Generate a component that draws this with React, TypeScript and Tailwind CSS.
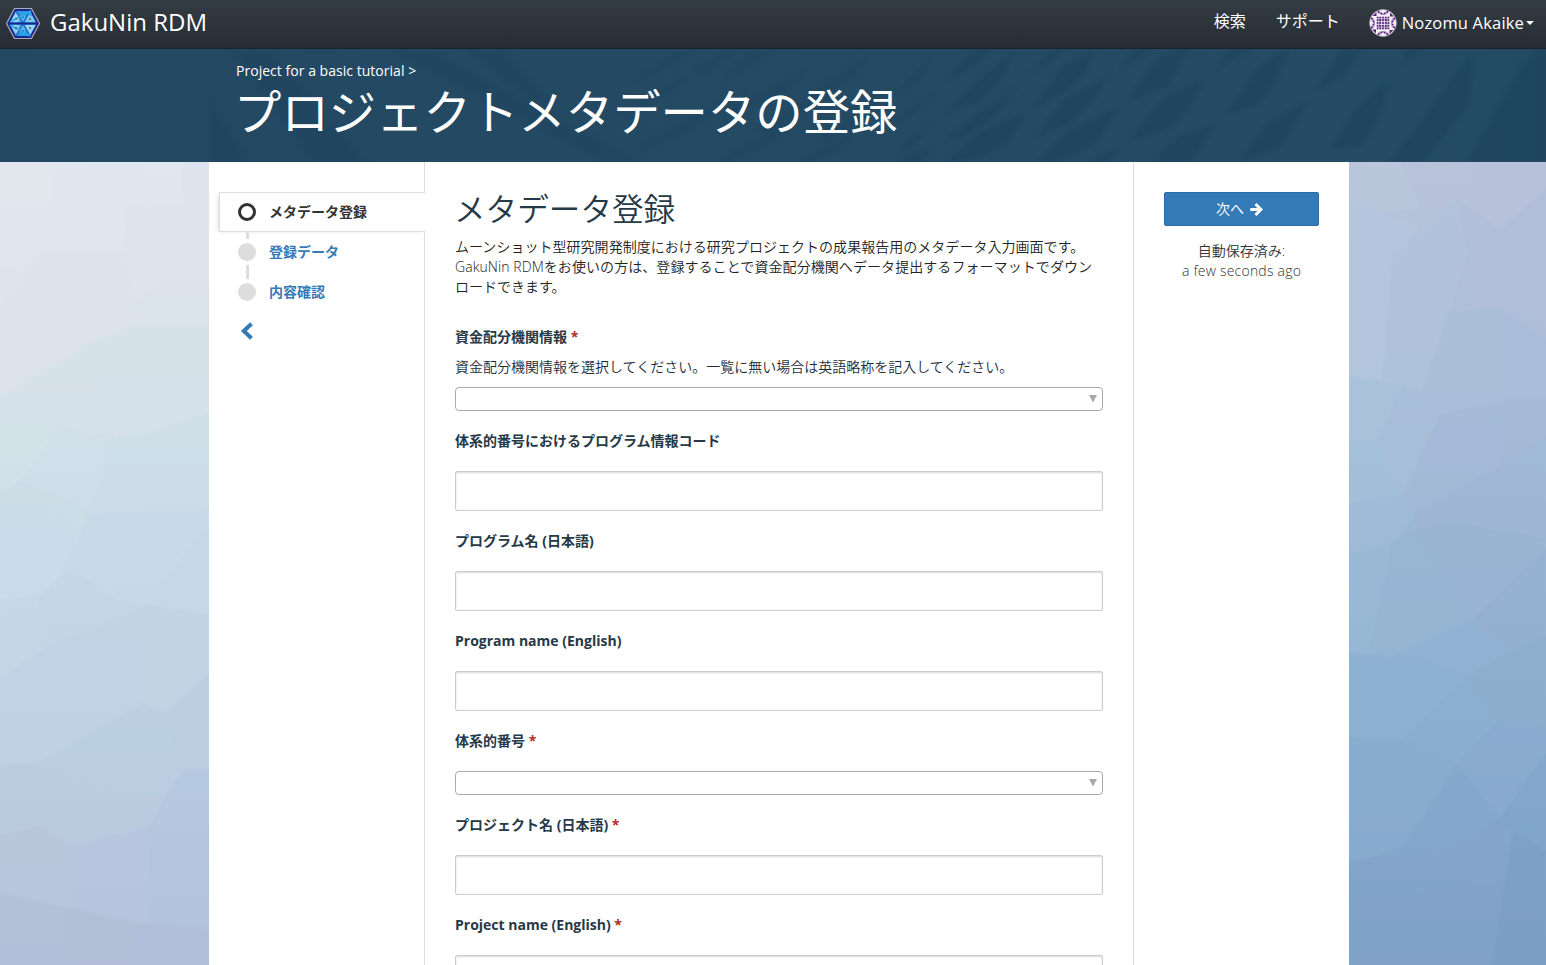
import React from "react";

const jp = "font-['Open_Sans','Noto_Sans_CJK_JP',sans-serif]";

type Facet = [string, string];

const leftFacets: Facet[] = [
  ["0,0 165,0 165,70 130,90 0,95", "#e3e8ee"],
  ["165,0 480,0 370,70 380,90 165,85", "#e0e6ed"],
  ["440,0 550,0 550,95 370,90", "#dfe7f0"],
  ["0,95 375,90 375,175 130,175 60,208 0,208", "#e1e7f0"],
  ["0,208 60,208 130,180 0,290", "#dfe5ee"],
  ["0,290 130,180 375,180 410,330 265,360 200,390 0,465", "#dde3ed"],
  ["550,0 645,0 645,95 550,95", "#dde4ed"],
  ["380,90 645,95 645,245 480,245 410,280 375,180", "#dee4ed"],
  ["410,280 480,245 645,245 645,325 410,325", "#dae2eb"],
  ["0,465 200,390 265,360 320,470 320,540 180,525 0,520", "#d6e2ea"],
  ["265,360 410,325 645,325 645,490 480,530 350,545", "#d5e2ea"],
  ["0,520 180,525 60,620 0,645", "#d3e3e9"],
  ["180,525 320,540 300,670 235,670 60,630", "#d1dfe9"],
  ["320,545 370,545 480,530 645,490 645,650 300,640", "#cddfe8"],
  ["0,650 60,630 235,670 265,720 130,720 130,680 0,680", "#ccdee6"],
  ["300,640 645,650 645,690 265,690", "#cddde7"],
  ["0,680 130,680 235,725 200,790 120,850 0,860", "#cadce9"],
  ["265,690 645,685 600,730 460,865 370,860 200,790", "#c8dae7"],
  ["600,730 645,710 645,890 450,870 490,830", "#c4d8e6"],
  ["0,860 120,850 130,960 80,1010 0,1010", "#c6d8e7"],
  ["120,850 220,800 350,860 450,870 340,900 130,950", "#c5d6e6"],
  ["130,955 340,900 450,870 430,1060 330,1095 120,1175 0,1180 0,1015", "#c0d3e4"],
  ["450,870 645,890 645,990 480,1070 430,1060", "#c1d4e3"],
  ["120,1175 330,1095 430,1060 500,1080 550,1160 500,1240 390,1245", "#bbcfe2"],
  ["500,1080 645,990 645,1190 550,1190", "#bacde1"],
  ["0,1180 120,1175 390,1245 500,1240 440,1300 220,1340 0,1320", "#bbcce0"],
  ["500,1240 550,1190 645,1190 645,1450 450,1300", "#b4c8e1"],
  ["0,1320 120,1300 210,1340 210,1460 0,1430", "#bac6dc"],
  ["210,1340 450,1300 450,1480 330,1480 210,1460", "#b8c5df"],
  ["450,1300 645,1300 645,1500 450,1480", "#b3c4de"],
  ["0,1430 210,1460 210,1568 0,1568", "#b4c0d8"],
  ["210,1460 420,1490 380,1568 210,1568", "#b3bed7"],
  ["420,1490 645,1500 645,1568 380,1568", "#b1bed9"],
];

const rightFacets: Facet[] = [
  ["27,0 180,0 250,90 60,100 27,80", "#b9c8dc"],
  ["180,0 420,0 370,70 250,100", "#b8c3db"],
  ["420,0 618,0 618,60 480,140 370,80", "#b8c1da"],
  ["27,80 230,130 160,190 130,430 27,425", "#b4c7df"],
  ["160,190 350,80 390,180 300,370 250,450 130,430", "#b1c3dc"],
  ["350,80 480,140 430,280 330,300 390,180", "#b1bfd9"],
  ["480,140 618,60 618,370 550,330 430,280", "#b0bdd9"],
  ["250,450 330,300 480,290 490,470 300,500", "#aabed8"],
  ["480,290 618,350 618,470 490,470", "#a9bcd8"],
  ["27,425 190,440 130,560 27,610", "#aac3da"],
  ["190,440 300,500 190,655 110,550", "#a8bfda"],
  ["27,550 110,550 190,655 27,670", "#a5c0da"],
  ["300,500 490,470 490,595 220,690 190,655", "#a4bad8"],
  ["490,470 618,470 618,545 490,595", "#a6b8d4"],
  ["490,595 618,545 618,610 570,620", "#9eb9d6"],
  ["220,690 490,595 618,610 618,735 350,710 220,710", "#a0b6d5"],
  ["27,670 190,655 220,690 160,745 27,770", "#a0bcd8"],
  ["27,770 160,745 90,960 27,960", "#99bad6"],
  ["160,745 220,720 380,860 390,900 160,970 90,960", "#96b6d4"],
  ["220,720 350,710 618,740 500,860 400,900", "#99b3d3"],
  ["400,900 618,760 618,930 510,960 390,1000", "#94b0d0"],
  ["27,960 160,970 390,900 510,960 380,1010 270,1080 27,1090", "#91b3d3"],
  ["27,970 240,970 380,1010 190,1130 27,1120", "#8db2d2"],
  ["380,1010 510,960 618,930 618,1110 470,1100", "#8caecc"],
  ["190,1130 380,1010 470,1100 350,1180", "#8aafd0"],
  ["27,1130 190,1130 350,1180 200,1330 27,1370", "#89adcf"],
  ["350,1180 470,1100 618,1110 618,1160 480,1285", "#88abcf"],
  ["200,1330 350,1180 480,1285 350,1340 100,1390", "#83a8cb"],
  ["480,1285 618,1160 618,1350 520,1310", "#81a6cb"],
  ["27,1370 350,1340 480,1285 500,1410 160,1440 27,1450", "#82a5c9"],
  ["27,1450 160,1440 500,1410 460,1568 27,1568", "#80a3c7"],
  ["500,1400 520,1310 618,1350 618,1568 460,1568", "#7c9fc6"],
];

const blades = [
  "0,140 80,35 45,100 0,150",
  "0,215 85,140 45,185 0,232",
  "110,110 180,15 225,12 170,65",
  "115,205 190,110 275,20 245,100 190,165",
  "110,285 210,190 285,125 215,225 165,265",
  "0,310 75,235 45,280 0,325",
  "0,345 80,310 50,350 0,350",
  "315,85 370,15 400,12 370,45",
  "325,187 395,70 470,15 450,80 400,140",
  "330,275 400,165 505,95 465,165 410,235",
  "110,350 200,260 305,205 255,300 190,335",
  "335,350 410,260 525,190 480,285 425,330 370,350",
  "535,75 565,12 610,12 570,45",
  "550,172 615,60 665,12 700,12 650,120",
  "560,285 640,160 735,105 700,185 660,245",
  "620,350 680,275 765,240 705,350",
  "455,350 535,310 510,350",
  "760,80 800,12 850,12 800,45",
  "795,208 870,70 940,15 905,120 865,180",
  "825,350 890,240 990,165 950,250 920,305",
  "1010,140 1075,12 1120,12 1080,90",
  "1045,315 1105,200 1190,100 1160,220 1120,300",
  "1190,350 1260,240 1390,20 1380,180 1270,350",
  "1215,60 1235,12 1270,12",
  "1380,350 1480,130 1540,12 1568,12 1568,350",
];

const fineBlades = [
  "1180,0 1240,0 1170,50 1120,90",
  "1060,60 1130,0 1150,0 1080,70",
  "920,90 1040,0 1060,0 950,85",
  "890,190 1040,80 1020,110 910,200",
  "1140,180 1300,60 1260,120 1150,195",
  "1010,230 1170,120 1120,170 1020,245",
  "930,290 1100,180 1060,230 940,300",
  "1190,240 1340,120 1300,180 1210,260",
  "1120,320 1270,220 1220,280 1130,336",
  "1310,130 1440,10 1410,70 1330,150",
  "1330,260 1460,150 1420,210 1350,275",
  "1280,336 1400,250 1370,300 1310,336",
  "0,150 90,336 0,336",
  "50,0 130,0 340,336 230,336",
  "390,0 480,0 940,336 860,336",
  "560,0 640,0 760,180 700,150",
];

function Backdrop() {
  return (
    <svg className="absolute inset-0 h-full w-full" viewBox="0 0 1546 965" aria-hidden="true">
      <defs>
        <linearGradient id="skyL" x1="0" y1="0" x2="0" y2="1">
          <stop offset="0" stopColor="#e2e7ee" />
          <stop offset="0.2" stopColor="#dce3ec" />
          <stop offset="0.3" stopColor="#d5e1ea" />
          <stop offset="0.45" stopColor="#cadce8" />
          <stop offset="0.6" stopColor="#c3d6e5" />
          <stop offset="0.8" stopColor="#bacbe0" />
          <stop offset="1" stopColor="#b2bed8" />
        </linearGradient>
        <linearGradient id="skyR" x1="0" y1="0" x2="0" y2="1">
          <stop offset="0" stopColor="#b9c3da" />
          <stop offset="0.3" stopColor="#a9bfd9" />
          <stop offset="0.5" stopColor="#99b6d5" />
          <stop offset="0.75" stopColor="#88acce" />
          <stop offset="1" stopColor="#7d9fc6" />
        </linearGradient>
        <filter id="soft"><feGaussianBlur stdDeviation="2.5" /></filter>
      </defs>
      <rect x="0" y="162" width="215" height="803" fill="url(#skyL)" />
      <rect x="1345" y="162" width="201" height="803" fill="url(#skyR)" />
      <g transform="translate(0 160) scale(0.33333 0.5134)" opacity="0.75" filter="url(#soft)">
        {leftFacets.map(([p, c]) => <polygon key={p} points={p} fill={c} stroke={c} strokeWidth="6" />)}
      </g>
      <g transform="translate(1340 160) scale(0.33333 0.5134)" opacity="0.75" filter="url(#soft)">
        {rightFacets.map(([p, c]) => <polygon key={p} points={p} fill={c} stroke={c} strokeWidth="6" />)}
      </g>
    </svg>
  );
}

function BannerPattern() {
  return (
    <svg className="absolute inset-0 h-full w-full" viewBox="0 49 1546 113" aria-hidden="true">
      <defs>
        <filter id="bladeBlur"><feGaussianBlur stdDeviation="5" /></filter>
        <linearGradient id="edge" x1="0" x2="1" y1="0" y2="0">
          <stop offset="0" stopColor="#224863" />
          <stop offset="0.3" stopColor="#244963" />
          <stop offset="0.9" stopColor="#254b65" />
          <stop offset="1" stopColor="#234a64" />
        </linearGradient>
      </defs>
      <rect y="49" width="1546" height="113" fill="url(#edge)" />
      <g transform="translate(900 45) scale(0.412 0.3333)" fill="#1c435d" opacity="0.6" filter="url(#bladeBlur)">
        {blades.map((p) => <polygon key={p} points={p} />)}
      </g>
      <g transform="translate(209 50) scale(0.4592 0.3333)" fill="#1c435d" opacity="0.35" filter="url(#bladeBlur)">
        {fineBlades.map((p) => <polygon key={p} points={p} />)}
      </g>
    </svg>
  );
}

function Logo() {
  return (
    <svg className="h-[34px] w-[36px]" viewBox="0 0 36 34" aria-hidden="true">
      <polygon points="9.5,1.5 26.5,1.5 34.5,16.5 26.5,31.5 9.5,31.5 1.5,16.5" fill="#1c2590" stroke="#a9adb5" strokeWidth="1.2" />
      <polygon points="11,4 25,4 31.8,16.5 25,29 11,29 4.2,16.5" fill="#2c9be2" />
      <polygon points="11,5 17,15 5.5,15" fill="#9fd8f2" />
      <polygon points="18,6 23.5,15 12.5,15" fill="#55b7ea" />
      <polygon points="25,5 30.5,15 19,15" fill="#7ccbef" />
      <polygon points="5.5,18 17,18 11,28" fill="#8fd0f0" />
      <polygon points="12.5,18 23.5,18 18,27" fill="#55b7ea" />
      <polygon points="19,18 30.5,18 25,28" fill="#9fd8f2" />
      <path d="M11 4L18 16.5L25 4M11 29L18 16.5L25 29" stroke="#1f6fd0" strokeWidth="1.6" fill="none" />
      <path d="M26 4L5 15M25 4L26 9M5 18L25 29" stroke="#2aa6ee" strokeWidth="1.8" fill="none" />
      <path d="M9.5 13L11 10L12.5 13ZM16.8 11L18 8.6L19.2 11ZM23.5 13L25 10L26.5 13ZM9.5 20L11 23L12.5 20ZM16.8 23L18 25.5L19.2 23ZM23.5 20L25 23L26.5 20Z" fill="#56718c" />
      <path d="M3 16.5H33" stroke="#1c2590" strokeWidth="2" />
    </svg>
  );
}

function Avatar() {
  return (
    <svg className="h-[28px] w-[28px]" viewBox="0 0 28 28" aria-hidden="true">
      <defs><clipPath id="round"><circle cx="14" cy="14" r="13.2" /></clipPath></defs>
      <circle cx="14" cy="14" r="13.4" fill="#f5f1f8" stroke="#b9b3bf" strokeWidth="0.6" />
      <g clipPath="url(#round)" fill="#572079">
        {[0, 90, 180, 270].map((a) => (
          <g key={a} transform={`rotate(${a} 14 14)`}>
            <path d="M7.5 1.5L10.5 5.5V1.5ZM20.5 1.5L17.5 5.5V1.5ZM11.5 2.5L14 5L16.5 2.5V5.5H11.5Z" />
            <path d="M3.5 7L7.5 3L7.5 7Z" />
          </g>
        ))}
        {[8, 10.7, 13.4, 16.1, 18.8].flatMap((y) =>
          [8, 10.7, 13.4, 16.1, 18.8].map((x) => <rect key={`${x}-${y}`} x={x - 0.3} y={y - 0.3} width="1.8" height="1.8" />)
        )}
        <path d="M9 10H19V10.7H9ZM9 17.6H19V18.3H9ZM10 9H10.7V19H10ZM17.4 9H18.1V19H17.4Z" opacity="0.6" />
      </g>
    </svg>
  );
}

function Navbar() {
  return (
    <header className="flex h-[49px] justify-between border-b border-[#1b2229] bg-linear-to-b from-[#343c44] to-[#262d34] text-white">
      <div className="flex pl-[5px]">
        <div className="pt-[7px]"><Logo /></div>
        <span className="ml-[9px] pt-[7px] text-[24px] leading-[30px]">GakuNin RDM</span>
      </div>
      <nav className="flex text-[16px] leading-[20px]">
        <a className="mr-[30px] pt-[11px]">検索</a>
        <a className="mr-[29px] pt-[11px]">サポート</a>
        <div className="flex pr-[12px]">
          <div className="pt-[9px]"><Avatar /></div>
          <span className="ml-[5px] pt-[13px] text-[16.5px] tracking-[0.17px]">Nozomu Akaike</span>
          <svg className="mt-[21px] ml-[2px] h-[4px] w-[8px]" viewBox="0 0 8 4"><path d="M0 0H8L4 4Z" fill="#fff" /></svg>
        </div>
      </nav>
    </header>
  );
}

function Banner() {
  return (
    <section className="relative h-[113px] bg-[#244963] text-white">
      <BannerPattern />
      <div className="relative pt-[12px] pl-[236px]">
        <p className="text-[14px] leading-[20px] tracking-[0.03px]">Project for a basic tutorial &gt;</p>
        <h1 className="-ml-[2px] pt-px text-[47.4px] leading-[60px] font-normal whitespace-nowrap">プロジェクトメタデータの登録</h1>
      </div>
    </section>
  );
}

function Steps() {
  return (
    <aside className="w-[216px] shrink-0 border-r border-[#ddd] pt-[30px] pl-[10px] text-[14px] leading-[20px] font-bold">
      <div className="-mr-px flex h-[40px] items-center border-y border-l border-[#ddd] bg-white shadow-[-3px_1px_4px_-2px_rgba(0,0,0,0.15)]">
        <span className="ml-[18px] h-[18px] w-[18px] rounded-full border-[3px] border-[#333]" />
        <span className="ml-[13px] pb-px text-[#333]">メタデータ登録</span>
      </div>
      <div className="ml-[27px] h-[7px] w-[3px] bg-[#ddd]" />
      <div className="flex h-[26px] items-center pl-[19px]">
        <span className="h-[18px] w-[18px] rounded-full bg-[#ddd]" />
        <a className="ml-[13px] pb-px text-[#337ab7]">登録データ</a>
      </div>
      <div className="ml-[27px] h-[14px] w-[3px] bg-[#ddd]" />
      <div className="flex h-[26px] items-center pl-[19px]">
        <span className="h-[18px] w-[18px] rounded-full bg-[#ddd]" />
        <a className="ml-[13px] pb-px text-[#337ab7]">内容確認</a>
      </div>
      <svg className="mt-[17px] ml-[21px] h-[18px] w-[14px]" viewBox="0 0 14 18">
        <path d="M11.5 1.8L3.8 9L11.5 16.2" fill="none" stroke="#337ab7" strokeWidth="4" />
      </svg>
    </aside>
  );
}

function Label({ text, required }: { text: string; required?: boolean }) {
  return (
    <label className="block h-[20px] text-[14px] leading-[20px] font-bold whitespace-nowrap text-[#263947]">
      {text}
      {required && <span className="text-[#b52b27]"> *</span>}
    </label>
  );
}

function SelectBox() {
  return (
    <div className="flex h-[24px] items-start justify-end rounded-[4px] border border-[#aaa] bg-white pt-[7px] pr-[5px]">
      <svg className="h-[8px] w-[8px]" viewBox="0 0 8 8"><path d="M0 0H8L4 7.5Z" fill="#aaa" /></svg>
    </div>
  );
}

function TextBox() {
  return <div className="h-[40px] rounded-[2px] border border-[#ccc] bg-white shadow-[inset_0_1px_2px_rgba(0,0,0,0.15)]" />;
}

function Field({ text, required, select }: { text: string; required?: boolean; select?: boolean }) {
  return (
    <div className="mt-[20px] flex flex-col gap-[20px]">
      <Label text={text} required={required} />
      {select ? <SelectBox /> : <TextBox />}
    </div>
  );
}

function FormColumn() {
  return (
    <main className="w-[708px] shrink-0 px-[30px] pt-[30px] text-[14px] leading-[20px]">
      <h2 className="-ml-px h-[35px] text-[31.6px] leading-[33px] font-[350] text-[#263947]">メタデータ登録</h2>
      <p className="mt-[10px] font-[350] whitespace-nowrap text-[#222]">
        <span className="tracking-[0.03px]">ムーンショット型研究開発制度における研究プロジェクトの成果報告用のメタデータ入力画面です。</span><br />
        <span className="tracking-[0.07px]">GakuNin RDMをお使いの方は、登録することで資金配分機関へデータ提出するフォーマットでダウン</span><br />
        ロードできます。
      </p>
      <div className="mt-[30px]">
        <Label text="資金配分機関情報" required />
        <p className="my-[10px] font-[350] whitespace-nowrap text-[#1c2d3a]">
          資金配分機関情報を選択してください。一覧に無い場合は英語略称を記入してください。
        </p>
        <SelectBox />
      </div>
      <Field text="体系的番号におけるプログラム情報コード" />
      <Field text="プログラム名 (日本語)" />
      <Field text="Program name (English)" />
      <Field text="体系的番号" required select />
      <Field text="プロジェクト名 (日本語)" required />
      <Field text="Project name (English)" required />
    </main>
  );
}

function ActionColumn() {
  return (
    <aside className="grow border-l border-[#ddd] px-[30px] pt-[30px] text-center text-[14px] leading-[20px]">
      <button className="flex h-[34px] w-full items-center justify-center rounded-[2px] border border-[#2e6da4] bg-[#337ab7] pr-[4px] text-white">
        次へ
        <svg className="ml-[6px] h-[13px] w-[13px]" viewBox="0 0 13 13">
          <path d="M0.3 6.5H10.5M5.5 1L11 6.5L5.5 12" fill="none" stroke="#fff" strokeWidth="3" />
        </svg>
      </button>
      <p className="mt-[15px] font-[350] text-[#333]">自動保存済み:<br /><span className="tracking-[0.22px]">a few seconds ago</span></p>
    </aside>
  );
}

export default function App() {
  return (
    <div className={`${jp} relative flex h-[965px] w-[1546px] flex-col overflow-hidden bg-white`}>
      <Backdrop />
      <div className="relative"><Navbar /></div>
      <Banner />
      <div className="relative ml-[209px] flex h-[803px] w-[1140px] overflow-hidden bg-white">
        <Steps />
        <FormColumn />
        <ActionColumn />
      </div>
    </div>
  );
}
